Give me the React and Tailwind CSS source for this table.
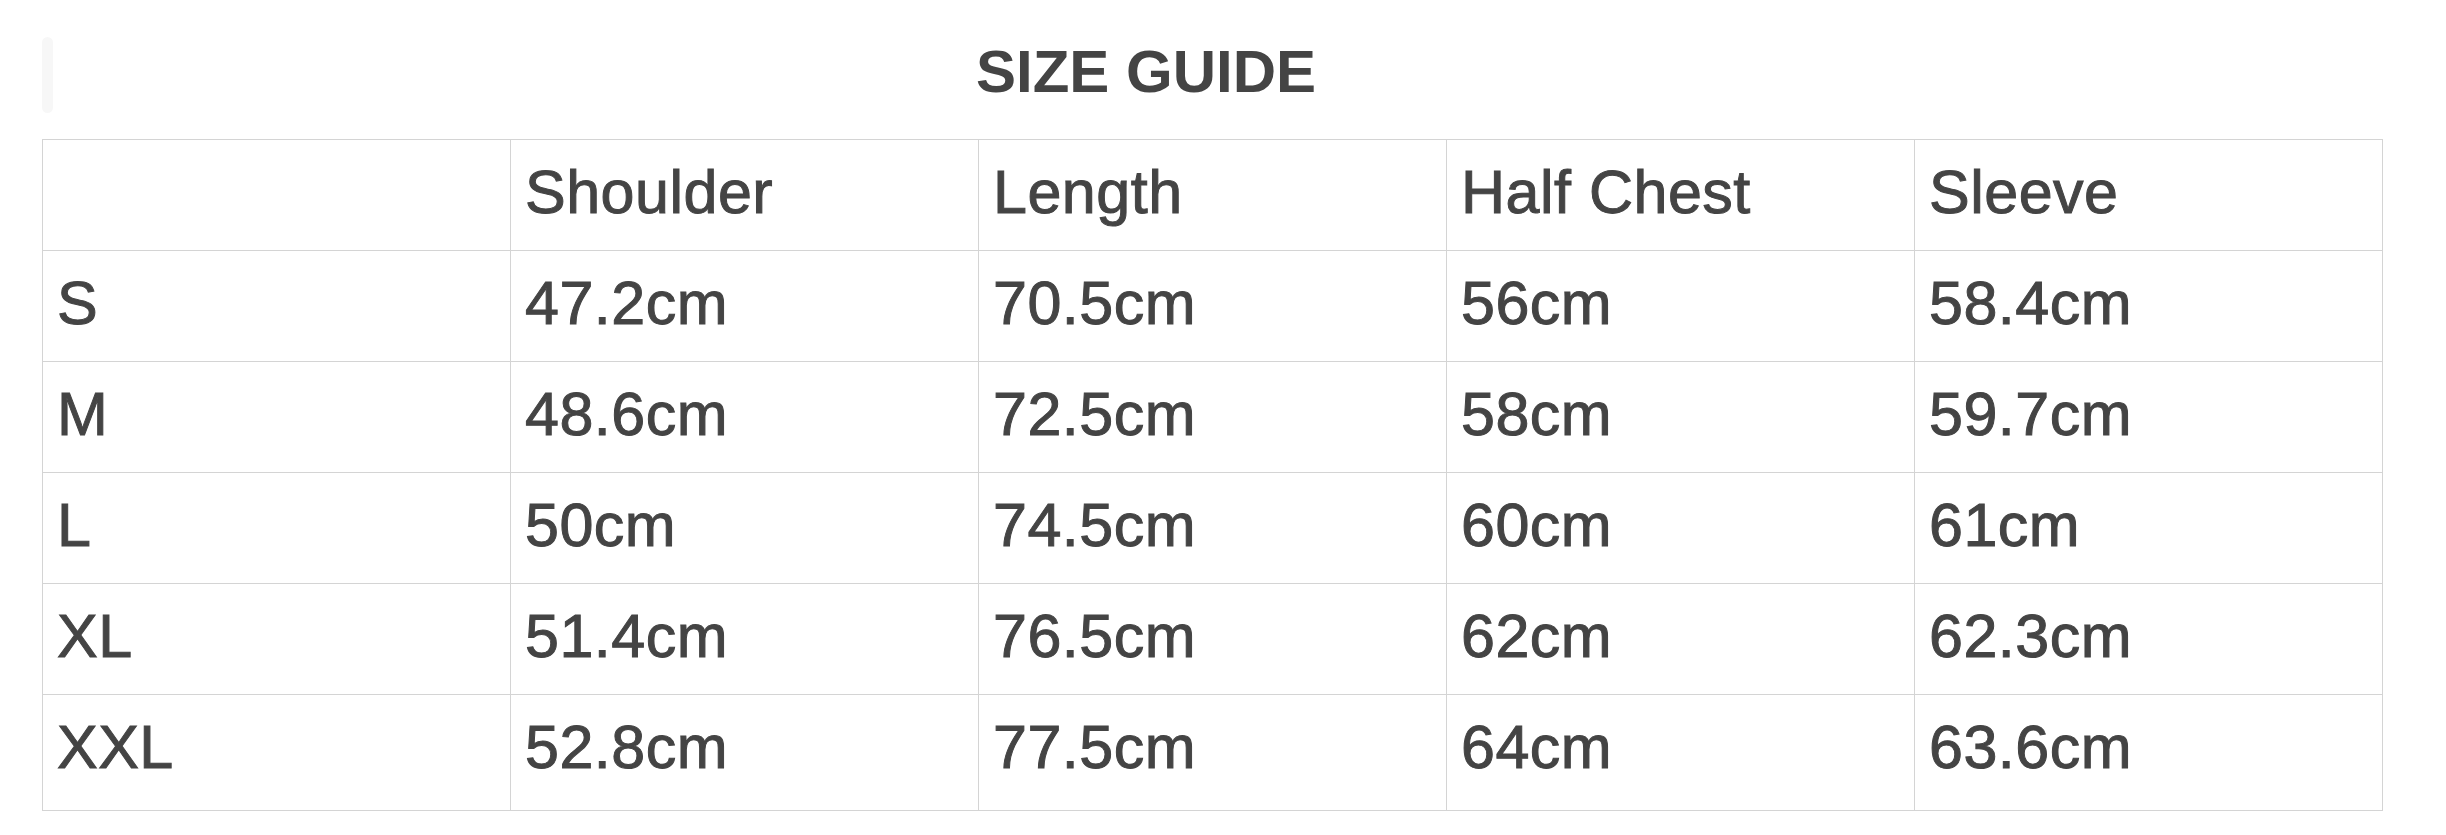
const columns = ["", "Shoulder", "Length", "Half Chest", "Sleeve"];

const rows = [
  ["S", "47.2cm", "70.5cm", "56cm", "58.4cm"],
  ["M", "48.6cm", "72.5cm", "58cm", "59.7cm"],
  ["L", "50cm", "74.5cm", "60cm", "61cm"],
  ["XL", "51.4cm", "76.5cm", "62cm", "62.3cm"],
  ["XXL", "52.8cm", "77.5cm", "64cm", "63.6cm"],
];

function Cell({ children, tall }) {
  return (
    <div
      className={`border-r border-b border-[#d4d4d4] pl-[14px] pt-[22px] text-[61px] leading-none tracking-[0.5px] text-[#444444] [-webkit-text-stroke:1px_#444444] ${
        tall ? "h-[116px]" : "h-[111px]"
      }`}
    >
      {children}
    </div>
  );
}

export default function App() {
  return (
    <div
      className="relative h-[835px] w-full bg-white"
      style={{ fontFamily: '"Liberation Sans", Arial, sans-serif' }}
    >
      {/* faint smudge at top left */}
      <div className="absolute left-[42px] top-[37px] h-[76px] w-[11px] rounded-full bg-[#f7f7f7]" />

      <div className="w-[2292px] pt-[42px] text-center">
        <h1 className="text-[60px] font-bold leading-none text-[#444444]">
          SIZE GUIDE
        </h1>
      </div>

      <div className="ml-[42px] mt-[37px] grid w-[2341px] grid-cols-[repeat(5,468px)] border-l border-t border-[#d4d4d4]">
        {columns.map((c, i) => (
          <Cell key={"h" + i}>{c}</Cell>
        ))}
        {rows.map((r, ri) =>
          r.map((v, ci) => (
            <Cell key={ri + "-" + ci} tall={ri === rows.length - 1}>
              {v}
            </Cell>
          ))
        )}
      </div>
    </div>
  );
}
